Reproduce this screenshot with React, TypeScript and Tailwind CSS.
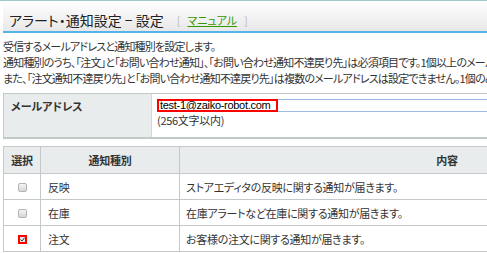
import React from 'react';

const rows = [
  { checked: false, type: '反映', desc: 'ストアエディタの反映に関する通知が届きます。' },
  { checked: false, type: '在庫', desc: '在庫アラートなど在庫に関する通知が届きます。' },
  { checked: true, type: '注文', desc: 'お客様の注文に関する通知が届きます。' },
];

const Box = ({ checked }: { checked: boolean }) => {
  if (checked) {
    return (
      <span className="inline-flex w-[9px] h-[9px] bg-[#ff0000] items-center justify-center align-middle">
        <span className="w-[5px] h-[5px] bg-[#e6e6e6] flex items-center justify-center">
          <svg width="5" height="5" viewBox="0 0 5 5">
            <path d="M0.5 2.5 L2 4 L4.5 0.8" stroke="#333" strokeWidth="1" fill="none" />
          </svg>
        </span>
      </span>
    );
  }
  return (
    <span className="inline-block w-[9px] h-[9px] rounded-[2px] border border-[#b4b4b4] bg-gradient-to-b from-[#f4f4f4] to-[#d6d6d6] align-middle" />
  );
};

export default function App() {
  return (
    <div className="w-[487px] h-[253px] overflow-hidden bg-white text-[#333] font-['Noto_Sans_CJK_JP',sans-serif] [font-feature-settings:'palt']">
      {/* header */}
      <div className="h-px bg-[#9ccaca]" />
      <div className="ml-[3px] h-[32px] flex items-center pt-[8px] pl-[6px] border-b-2 border-[#55b5ea] bg-gradient-to-b from-white to-[#e8e8e8] whitespace-nowrap">
        <h1 className="text-[14px] leading-none text-[#222]">アラート・通知設定 − 設定</h1>
        <span className="ml-[13px] text-[11px] text-[#bbb]">
          [
          <a className="mx-[7px] text-[#339900] underline">マニュアル</a>
          ]
        </span>
      </div>

      {/* description */}
      <div className="mt-[5px] pl-[3px] text-[11px] tracking-[-0.8px] leading-[16px] whitespace-nowrap">
        <p>受信するメールアドレスと通知種別を設定します。</p>
        <p>通知種別のうち、「注文」と「お問い合わせ通知」、「お問い合わせ通知不達戻り先」は必須項目です。1個以上のメールアドレスを設定してください。</p>
        <p>また、「注文通知不達戻り先」と「お問い合わせ通知不達戻り先」は複数のメールアドレスは設定できません。1個のみ設定してください。</p>
      </div>

      {/* email */}
      <div className="mt-[7px] ml-[3px] flex border-t border-l border-b-2 border-[#c3c8c8] w-[712px]">
        <div className="w-[148px] shrink-0 bg-[#e8eced] border-r border-[#d4d8d8] pt-[4px] pl-[7px] text-[11px] leading-[16px] font-bold">
          メールアドレス
        </div>
        <div className="flex-1 pt-[5px] pl-[5px] pb-[9px]">
          <div className="relative h-[13px] border-y border-[#9db9e4] pl-[3px] flex items-center text-[11px] leading-none font-['Liberation_Sans',sans-serif] tracking-[-0.3px] text-black">
            test-1@zaiko-robot.com
            <span className="absolute left-0 -top-px w-[121px] h-[13px] border-2 border-[#ff0000]" />
          </div>
          <p className="text-[11px] leading-[16px] tracking-[-0.3px]">(256文字以内)</p>
        </div>
      </div>

      {/* notification types */}
      <table className="mt-[7px] ml-[3px] w-[712px] table-fixed border-collapse text-[11px] tracking-[-0.3px] leading-[16px]">
        <colgroup>
          <col className="w-[37px]" />
          <col className="w-[139px]" />
          <col />
        </colgroup>
        <thead>
          <tr className="h-[27px] bg-[#e8eced]">
            <th className="border border-[#c3c8c8] font-bold">選択</th>
            <th className="border border-[#c3c8c8] font-bold">通知種別</th>
            <th className="border border-[#c3c8c8] font-bold">内容</th>
          </tr>
        </thead>
        <tbody>
          {rows.map((r) => (
            <tr key={r.type} className="h-[26px]">
              <td className="border border-[#c3c8c8] text-center leading-none">
                <Box checked={r.checked} />
              </td>
              <td className="border border-[#c3c8c8] pl-[7px]">{r.type}</td>
              <td className="border border-[#c3c8c8] pl-[6px]">{r.desc}</td>
            </tr>
          ))}
        </tbody>
      </table>
    </div>
  );
}
